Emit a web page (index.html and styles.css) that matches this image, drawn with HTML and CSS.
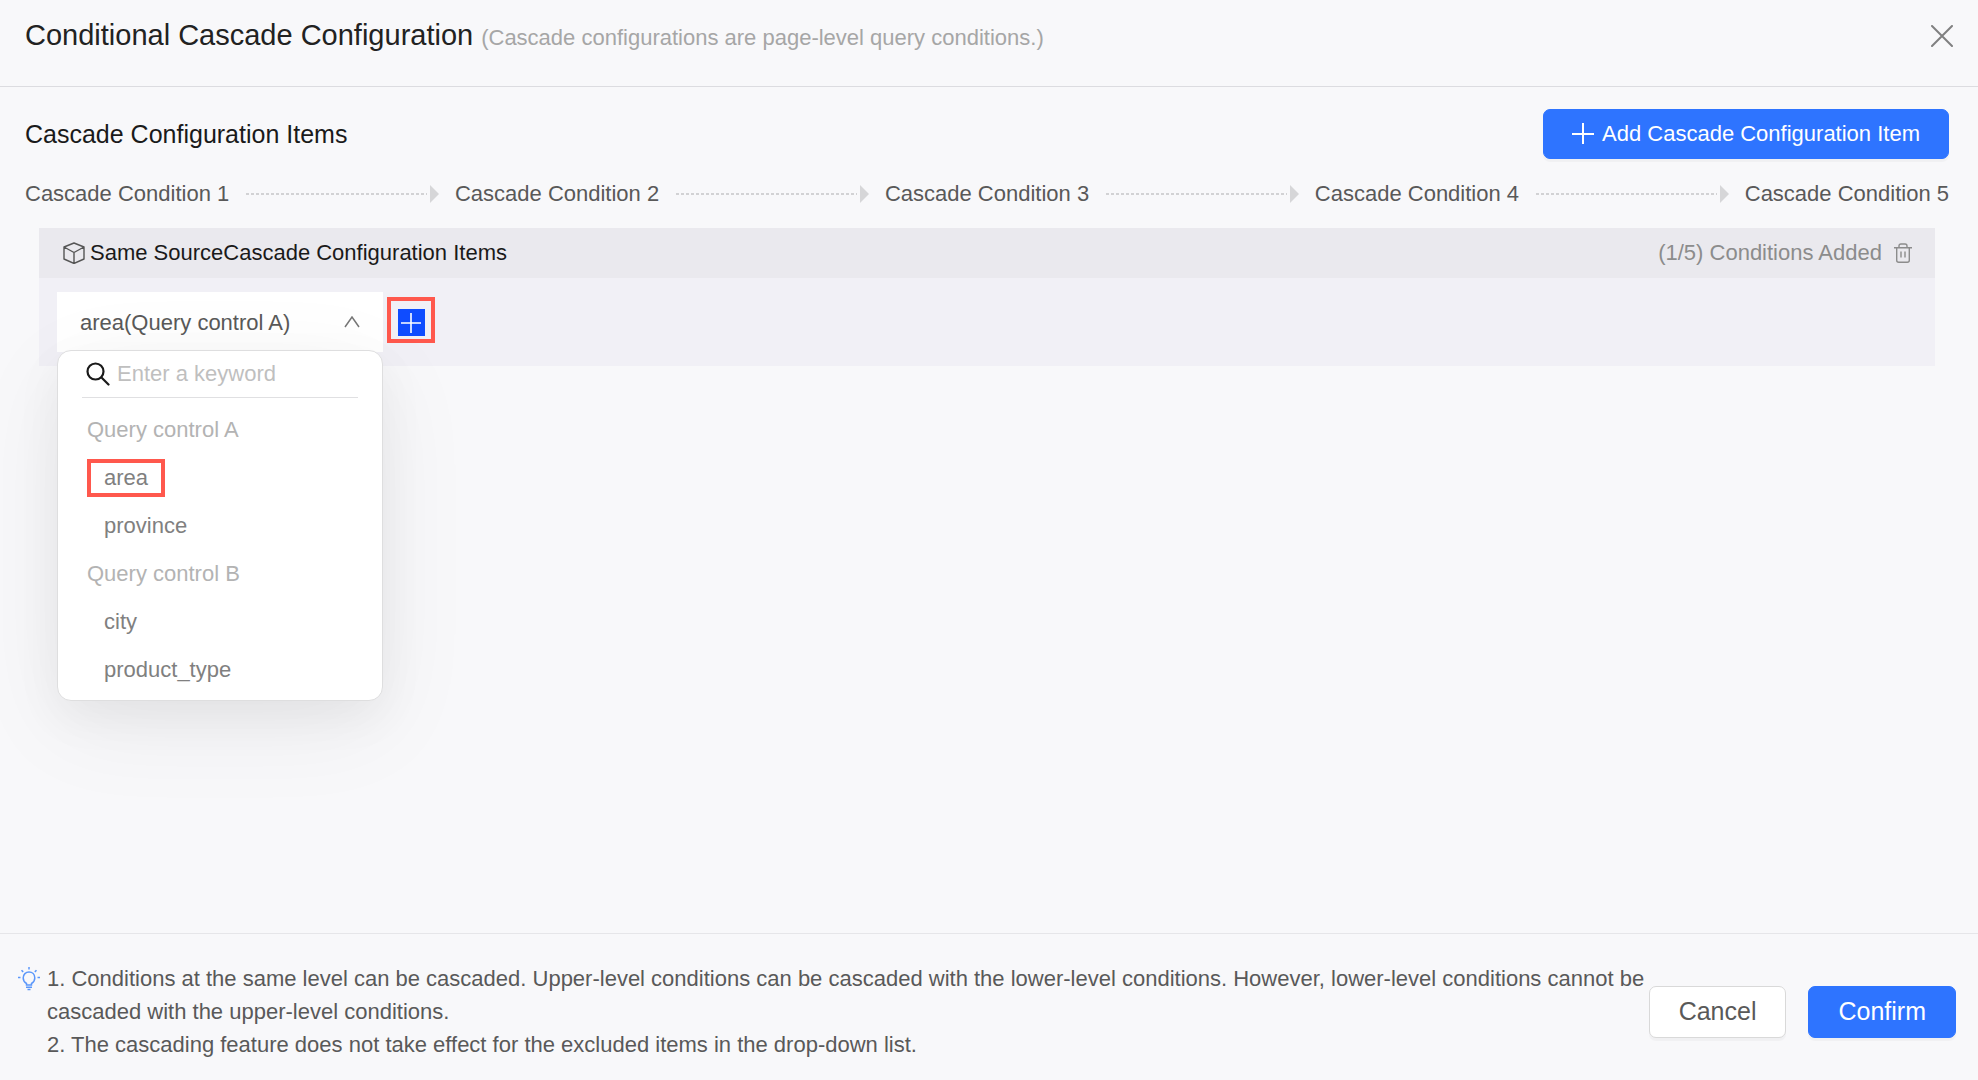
FILE: index.html
```html
<!DOCTYPE html>
<html lang="en">
<head>
    <meta charset="UTF-8">
    <meta name="viewport" content="width=device-width, initial-scale=1.0">
    <title>Conditional Cascade Configuration</title>
    <link rel="stylesheet" href="styles.css">
</head>

<body>
    <div class="dialog">
        <header class="dialog-header">
            <h1>Conditional Cascade Configuration</h1>
            <span class="subtitle">(Cascade configurations are page-level query conditions.)</span>
            <button class="icon-btn close" aria-label="Close">
                <svg width="22" height="22" viewBox="0 0 22 22" fill="none" stroke="currentColor" stroke-width="2" stroke-linecap="round"><path d="M1 1l20 20M21 1L1 21"/></svg>
            </button>
        </header>

        <main>
            <div class="section-head">
                <h2>Cascade Configuration Items</h2>
                <button class="btn primary add">
                    <svg width="22" height="22" viewBox="0 0 22 22" fill="none" stroke="currentColor" stroke-width="2"><path d="M11 0v21M0 11h22"/></svg>
                    Add Cascade Configuration Item
                </button>
            </div>

            <div class="steps">
                <span>Cascade Condition 1</span>
                <i class="arrow"></i>
                <span>Cascade Condition 2</span>
                <i class="arrow"></i>
                <span>Cascade Condition 3</span>
                <i class="arrow"></i>
                <span>Cascade Condition 4</span>
                <i class="arrow"></i>
                <span>Cascade Condition 5</span>
            </div>

            <section class="panel">
                <div class="panel-head">
                    <svg width="22" height="22" viewBox="0 0 22 22" fill="none" stroke="#555" stroke-width="1.4" stroke-linejoin="round"><path d="M11 1l10 4v12l-10 4.500L1 17V5zM1 5l10 5.500L21 5M11 10.500v11"/></svg>
                    <h3>Same SourceCascade Configuration Items</h3>
                    <span class="count">(1/5) Conditions Added</span>
                    <button class="icon-btn" aria-label="Delete">
                        <svg width="18" height="20" viewBox="0 0 18 20" fill="none" stroke="currentColor" stroke-width="1.400"><path d="M0 4.700h18M5 4.500V3q0-2 2-2h4q2 0 2 2v1.500M2.700 5v12.300q0 2 2 2h8.600q2 0 2-2V5M7 8.500v6M11 8.500v6"/></svg>
                    </button>
                </div>
                <div class="panel-body">
                    <div class="field">
                        <select class="field-select" aria-label="Query condition">
                            <option>area(Query control A)</option>
                        </select>
                        <svg class="chevron" width="16" height="12" viewBox="0 0 16 12" fill="none" stroke="#777" stroke-width="1.500"><path d="M1 11l7-10 7 10"/></svg>

                        <div class="menu">
                            <label class="search">
                                <svg width="24" height="24" viewBox="0 0 24 24" fill="none" stroke="#1a1a1a" stroke-width="2.200" stroke-linecap="round"><circle cx="9.500" cy="9.500" r="8"/><path d="M15.500 15.500l7 7"/></svg>
                                <input type="text" placeholder="Enter a keyword" aria-label="Enter a keyword">
                            </label>
                            <div class="group">Query control A</div>
                            <button class="item"><span class="marked">area</span></button>
                            <button class="item">province</button>
                            <div class="group">Query control B</div>
                            <button class="item">city</button>
                            <button class="item">product_type</button>
                        </div>
                    </div>
                    <div class="add-box">
                        <button class="add-condition" aria-label="Add condition">
                            <svg width="22" height="22" viewBox="0 0 22 22" fill="none" stroke="#fff" stroke-width="1.600"><path d="M11 1v20M1 11h20"/></svg>
                        </button>
                    </div>
                </div>
            </section>
        </main>

        <footer class="dialog-footer">
            <svg class="bulb" width="22" height="24" viewBox="0 0 22 24" fill="none" stroke="#5b97fa" stroke-width="1.500"><path d="M8.500 18v-1.500C6 15 5.200 13 5.200 11c0-3.600 2.600-6 5.800-6s5.800 2.400 5.800 6c0 2-.8 4-3.300 5.500V18zM8 20.300h6M9.500 22.500h3M11 0v2.500M3.500 3.200l1.700 1.700M18.500 3.200l-1.700 1.700M0 10.500h2.500M19.500 10.500H22"/></svg>
            <div class="notes">
                <p>1. Conditions at the same level can be cascaded. Upper-level conditions can be cascaded with the lower-level conditions. However, lower-level conditions cannot be cascaded with the upper-level conditions.</p>
                <p>2. The cascading feature does not take effect for the excluded items in the drop-down list.</p>
            </div>
            <div class="actions">
                <button class="btn">Cancel</button>
                <button class="btn primary">Confirm</button>
            </div>
        </footer>
    </div>
</body>
</html>
```

FILE: styles.css
```css
* {
    box-sizing: border-box;
}

body {
    margin: 0;
    font-family: "Liberation Sans", Arial, sans-serif;
    font-size: 22px;
    color: #595959;
    background-color: #f8f8fa;
}

h1, h2, h3, p {
    margin: 0;
    font-weight: normal;
}

button, input, select {
    font-family: inherit;
    font-size: inherit;
    color: inherit;
}

button {
    cursor: pointer;
}

svg {
    flex-shrink: 0;
}

.dialog {
    display: flex;
    flex-direction: column;
    min-height: 100vh;
}

.dialog-header {
    display: flex;
    align-items: baseline;
    gap: 8px;
    padding: 19px 25px 34px;
    border-bottom: 1px solid #dcdce0;
}

h1 {
    font-size: 29px;
    line-height: 33px;
    color: #222;
}

.subtitle {
    font-size: 22px;
    line-height: 24px;
    color: #a6a6a6;
}

.icon-btn {
    display: flex;
    padding: 0;
    border: none;
    background: none;
    color: #8c8c8c;
}

.close {
    align-self: center;
    margin-left: auto;
    color: #808080;
}

main {
    flex: 1;
    padding: 22px 29px 0 25px;
}

.section-head {
    display: flex;
    justify-content: space-between;
    align-items: center;
}

h2 {
    font-size: 25px;
    color: #1a1a1a;
}

.btn {
    display: flex;
    align-items: center;
    height: 52px;
    padding: 0 29px;
    font-size: 25px;
    border: 1px solid #d9d9d9;
    border-radius: 7px;
    background-color: #fff;
    box-shadow: 0 3px 1px rgba(0, 0, 0, 0.03);
}

.primary {
    color: #fff;
    border-color: #2e74ff;
    background-color: #2e74ff;
}

.add {
    gap: 8px;
    height: 50px;
    padding: 0 28px;
    font-size: 22px;
}

.steps {
    display: flex;
    align-items: center;
    height: 69px;
}

/* dashed line with a solid head */
.arrow {
    flex: 1;
    display: flex;
    align-items: center;
    gap: 3px;
    margin: 0 16px 0 17px;
}

.arrow::before {
    content: "";
    flex: 1;
    height: 2px;
    background: repeating-linear-gradient(to right, #d2d2d4 0 3px, transparent 3px 5px);
}

.arrow::after {
    content: "";
    border-left: 9px solid #d6d6d8;
    border-top: 9px solid transparent;
    border-bottom: 9px solid transparent;
}

.panel {
    margin: 0 14px;
    background-color: #f1f0f6;
}

.panel-head {
    display: flex;
    align-items: center;
    height: 50px;
    padding: 0 23px 0 24px;
    background-color: #eae9ee;
}

h3 {
    margin-left: 5px;
    font-size: 22px;
    color: #1a1a1a;
}

.count {
    margin-left: auto;
    margin-right: 12px;
    color: #8c8c8c;
}

.panel-body {
    display: flex;
    gap: 4px;
    padding: 14px 18px;
}

.field {
    position: relative;
    width: 326px;
}

.field-select {
    width: 100%;
    height: 60px;
    padding: 0 48px 0 23px;
    border: none;
    border-radius: 0;
    appearance: none;
    background-color: #fff;
}

.chevron {
    position: absolute;
    right: 23px;
    top: 24px;
    pointer-events: none;
}

.menu {
    position: absolute;
    top: 58px;
    left: 0;
    width: 100%;
    padding: 0 24px 6px;
    border: 1px solid #dededf;
    border-radius: 14px;
    background-color: #fff;
    box-shadow: 0 24px 100px rgba(0, 0, 0, 0.06), 0 16px 48px rgba(0, 0, 0, 0.05);
}

.search {
    display: flex;
    align-items: center;
    gap: 7px;
    height: 47px;
    margin-bottom: 8px;
    padding-left: 4px;
    border-bottom: 1px solid #e0e0e2;
}

.search input {
    width: 100%;
    padding: 0;
    border: none;
    outline: none;
    background: none;
}

.search input::placeholder {
    color: #bfbfbf;
}

.group, .item {
    display: flex;
    align-items: center;
    height: 48px;
    padding: 0 5px;
}

.group {
    color: #b3b3b3;
}

.item {
    width: 100%;
    padding-left: 22px;
    border: none;
    background: none;
    color: #808080;
}

.marked {
    margin-left: -17px;
    padding: 3px 13px;
    line-height: 24px;
    border: 4px solid #ff584d;
}

.add-box {
    display: flex;
    align-items: flex-end;
    justify-content: center;
    width: 48px;
    height: 46px;
    margin-top: 5px;
    padding-bottom: 3px;
    border: 4px solid #ff584d;
}

.add-condition {
    display: flex;
    align-items: center;
    justify-content: center;
    width: 27px;
    height: 27px;
    padding: 0;
    border: none;
    background-color: #0f4cff;
}

.dialog-footer {
    display: flex;
    align-items: center;
    padding: 28px 22px 19px 18px;
    border-top: 1px solid #e6e6e9;
}

.bulb {
    align-self: flex-start;
    margin-top: 5px;
}

.notes {
    flex: 1;
    margin-left: 7px;
    line-height: 33px;
}

.actions {
    display: flex;
    gap: 22px;
}
```
